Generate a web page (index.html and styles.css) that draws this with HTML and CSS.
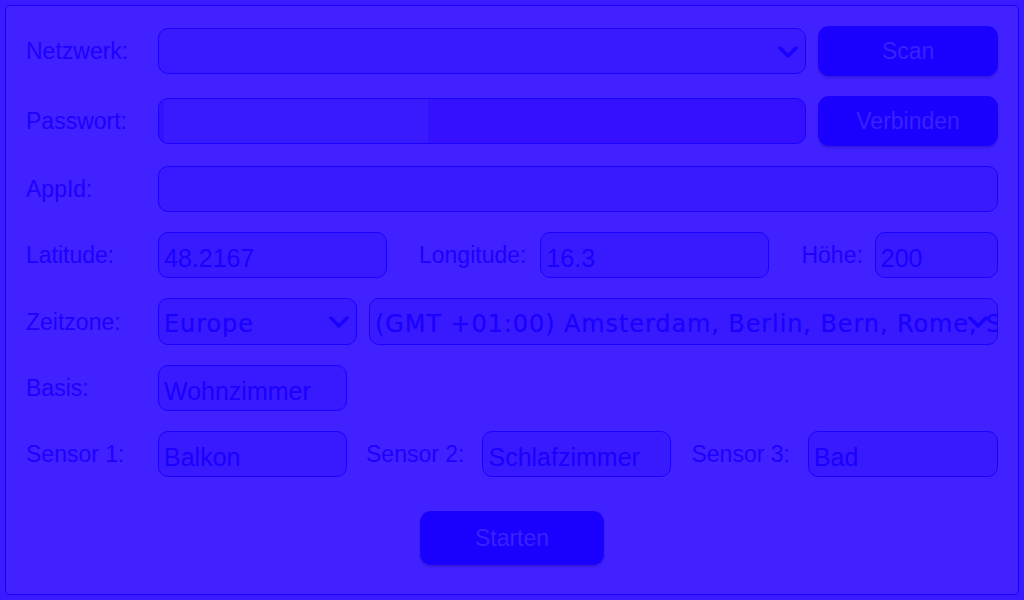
FILE: index.html
```html
<!DOCTYPE html>
<html lang="de">
<head>
    <meta charset="UTF-8">
    <meta name="viewport" content="width=device-width, initial-scale=1.0">
    <title>Einrichtung</title>
    <link rel="stylesheet" href="styles.css">
</head>
<body>
    <div class="panel">
        <div class="row row-tall">
            <label class="label">Netzwerk:</label>
            <div class="select-wrap wifi">
                <select class="select"><option></option></select>
                <svg class="chevron" viewBox="0 0 20 12"><path d="M2 2 L10 10 L18 2"/></svg>
            </div>
            <button class="btn side-btn">Scan</button>
        </div>
        <div class="row row-tall">
            <label class="label">Passwort:</label>
            <input class="field pw" type="password" value="">
            <button class="btn side-btn">Verbinden</button>
        </div>
        <div class="row">
            <label class="label">AppId:</label>
            <input class="field grow" type="text" value="">
        </div>
        <div class="row">
            <label class="label">Latitude:</label>
            <input class="field coord" type="text" value="48.2167">
            <label class="label-inline lon">Longitude:</label>
            <input class="field coord" type="text" value="16.3">
            <label class="label-inline alt">Höhe:</label>
            <input class="field grow" type="text" value="200">
        </div>
        <div class="row row-zone">
            <label class="label">Zeitzone:</label>
            <div class="select-wrap region">
                <select class="select"><option>Europe</option></select>
                <svg class="chevron" viewBox="0 0 20 12"><path d="M2 2 L10 10 L18 2"/></svg>
            </div>
            <div class="select-wrap zone">
                <select class="select"><option>(GMT +01:00) Amsterdam, Berlin, Bern, Rome, Stockholm, Vienna</option></select>
                <svg class="chevron" viewBox="0 0 20 12"><path d="M2 2 L10 10 L18 2"/></svg>
            </div>
        </div>
        <div class="row">
            <label class="label">Basis:</label>
            <input class="field room" type="text" value="Wohnzimmer">
        </div>
        <div class="row">
            <label class="label">Sensor 1:</label>
            <input class="field room" type="text" value="Balkon">
            <label class="label-inline s2">Sensor 2:</label>
            <input class="field room" type="text" value="Schlafzimmer">
            <label class="label-inline s3">Sensor 3:</label>
            <input class="field grow" type="text" value="Bad">
        </div>
        <div class="actions">
            <button class="btn start">Starten</button>
        </div>
    </div>
</body>
</html>
```

FILE: styles.css
```css
body {
    margin: 5px;
    background-color: #3a1aff;
    font-family: "Liberation Sans", Arial, sans-serif;
}
.panel {
    box-sizing: border-box;
    width: 1014px;
    height: 590px;
    padding: 20px 20px 0 20px;
    background-color: #4121ff;
    border: 1px solid #1a00ff;
    border-radius: 4px;
    display: flex;
    flex-direction: column;
    gap: 20px;
}
.row {
    display: flex;
    align-items: center;
    height: 46px;
}
.row-tall {
    height: 50px;
}
.row-zone {
    height: 47px;
}
.label {
    width: 132px;
    flex-shrink: 0;
    padding-top: 1px;
    font-size: 23px;
    color: #1e00ff;
}
.label-inline {
    padding-top: 1px;
    font-size: 23px;
    color: #1e00ff;
    margin-right: 13px;
    white-space: nowrap;
}
.lon { margin-left: 32px; margin-right: 14px; }
.alt { margin-left: 32px; margin-right: 12px; }
.s2 { margin-left: 19px; margin-right: 18px; }
.s3 { margin-left: 20px; margin-right: 18px; }
.field {
    box-sizing: border-box;
    height: 46px;
    padding: 6px 0 0 5px;
    border: 1px solid #1a00ff;
    border-radius: 10px;
    background-color: #391aff;
    color: #1a00ff;
    font-family: "Liberation Sans", Arial, sans-serif;
    font-size: 25px;
    outline: none;
}
.grow {
    flex: 1;
    min-width: 0;
}
.pw {
    width: 649px;
    background: linear-gradient(to right, #3411ff 0 5px, #391aff 5px 269px, #3510ff 269px);
}
.coord { width: 229px; }
.room { width: 189px; }
.select-wrap {
    position: relative;
    height: 46px;
}
.wifi { width: 649px; }
.region { width: 199px; height: 47px; }
.zone { flex: 1; margin-left: 12px; height: 47px; }
.select {
    appearance: none;
    -webkit-appearance: none;
    box-sizing: border-box;
    width: 100%;
    height: 100%;
    padding: 5px 0 0 5px;
    border: 1px solid #1a00ff;
    border-radius: 10px;
    background-color: #391aff;
    color: #1a00ff;
    font-family: "DejaVu Sans", sans-serif;
    font-size: 24px;
    letter-spacing: 0.9px;
    -webkit-text-stroke: 0.2px #1a00ff;
    outline: none;
}
.chevron {
    position: absolute;
    right: 8px;
    top: 18px;
    width: 20px;
    height: 12px;
    fill: none;
    stroke: #1a00ff;
    stroke-width: 3.5;
    stroke-linecap: round;
    stroke-linejoin: round;
}
.zone .chevron {
    right: 10px;
}
.btn {
    height: 50px;
    border: none;
    border-radius: 11px;
    background-color: #1a00ff;
    color: #3a22ff;
    font-family: "Liberation Sans", Arial, sans-serif;
    font-size: 23px;
    box-shadow: 0 2px 2px rgba(20, 0, 120, 0.25);
    cursor: pointer;
}
.side-btn {
    width: 180px;
    margin-left: 12px;
}
.actions {
    display: flex;
    justify-content: center;
    margin-top: 14px;
}
.start {
    width: 184px;
    height: 54px;
}
```
